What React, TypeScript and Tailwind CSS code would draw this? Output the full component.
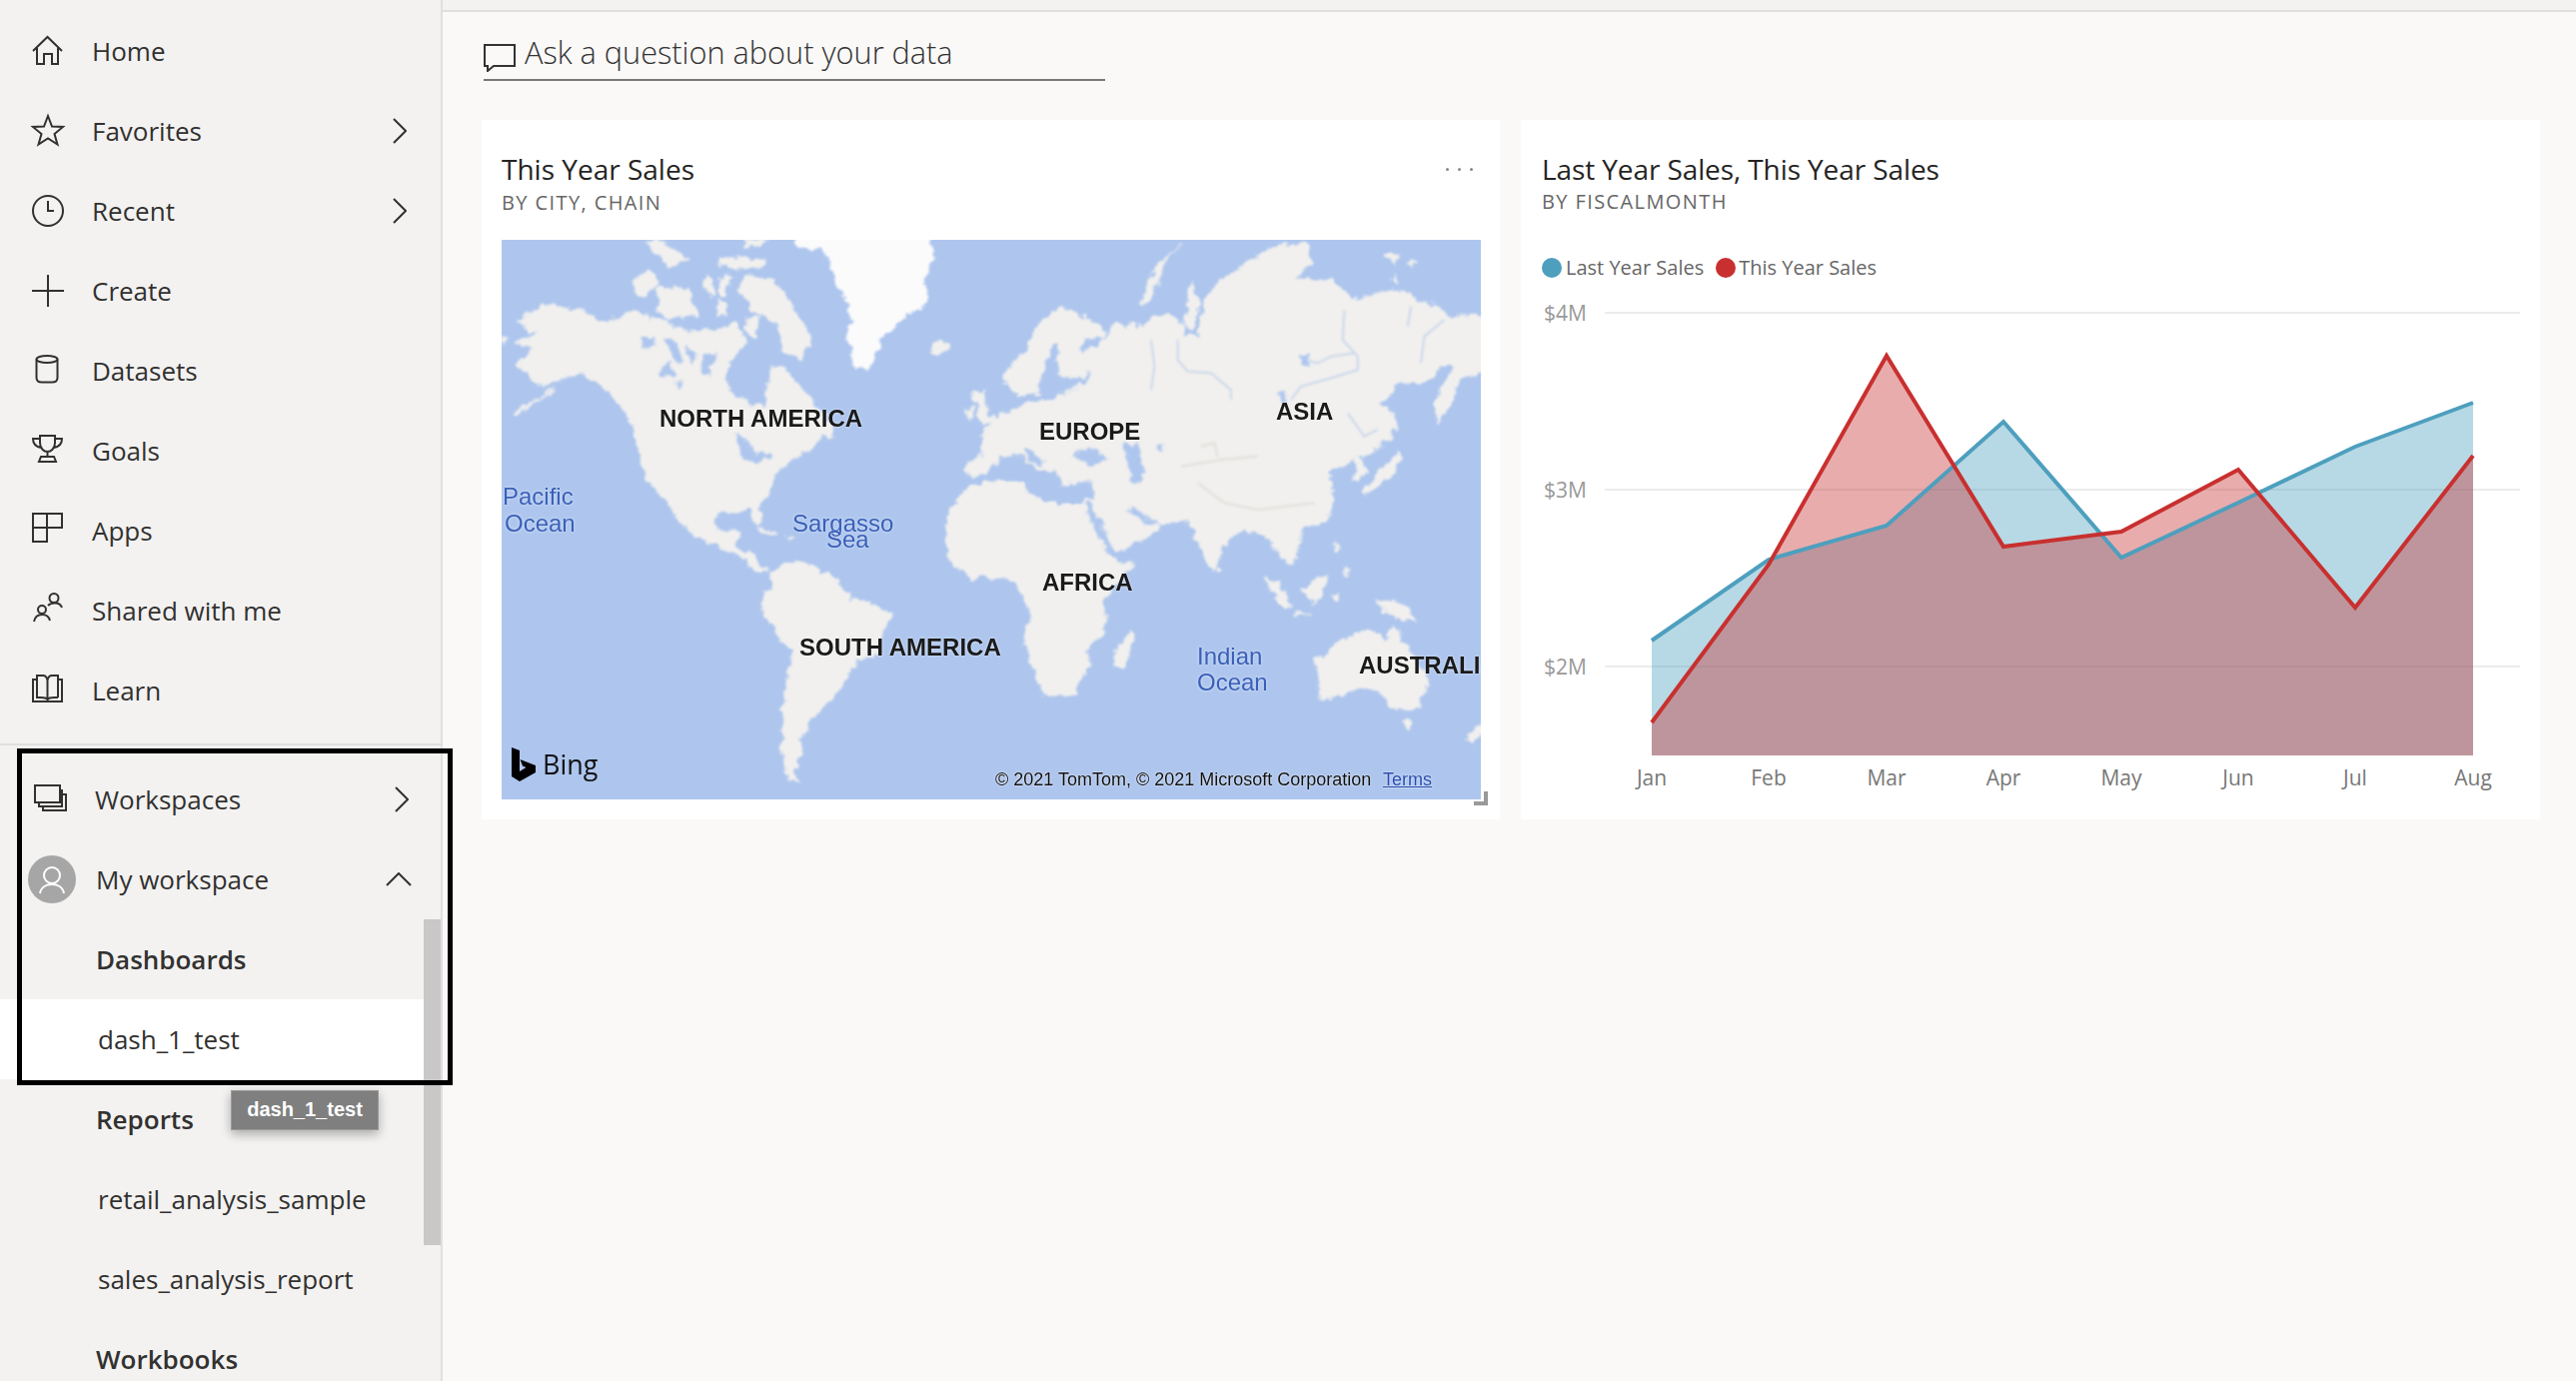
const sans = 'font-["Open_Sans","Liberation_Sans",sans-serif]'

function HomeIcon() {
  return <path d="M1 16 L15.5 2 L30 16 M5 13 V29 H12 V19 H20 V29 H26 V13" />
}
function StarIcon() {
  return <path d="M16 1 L20 11.5 L31 12 L22.5 19 L25.5 29.5 L16 23.5 L6.5 29.5 L9.5 19 L1 12 L12 11.5 Z" />
}
function ClockIcon() {
  return (
    <>
      <circle cx="16" cy="16" r="15" />
      <path d="M16 6 V16 H22" />
    </>
  )
}
function PlusIcon() {
  return <path d="M0 16 H32 M16 0 V32" />
}
function DatasetIcon() {
  return (
    <>
      <ellipse cx="15" cy="4.5" rx="10.5" ry="3.5" />
      <path d="M4.5 4.5 V23 Q4.5 27.5 10 27.5 H20 Q25.5 27.5 25.5 23 V4.5" />
    </>
  )
}
function TrophyIcon() {
  return (
    <path d="M8 1 H23 V8 C23 14 19 17 15.5 17 C12 17 8 14 8 8 Z M8 4 H1 C1 9 4 12 9 13 M23 4 H30 C30 9 27 12 22 13 M15.5 17 V22 M9 22 H22 L24 27 H7 Z" />
  )
}
function AppsIcon() {
  return <path d="M1 -1 H30 V13 H1 Z M1 13 H15 V27 H1 Z M15 -1 V13" />
}
function SharedIcon() {
  return (
    <>
      <circle cx="22" cy="3.5" r="4.5" />
      <circle cx="10" cy="15" r="4" />
      <path d="M2 27 C3 22 6 20 10 20 C14 20 17 22 18 26 M16 11 C18 9 20 8.5 23 8.5 C26 8.5 29 10 30 13" />
    </>
  )
}
function BookIcon() {
  return (
    <path d="M5 5 H1 V27 H30 V5 H26 M5 23 V1 H11 C13 1 15 3 15.5 6 V25 C14 23 12 23 9 23 Z M26 23 V1 H20 C18 1 16 3 15.5 6 M15.5 25 C17 23 19 23 22 23 H26" />
  )
}
function WorkspacesIcon() {
  return <path d="M1 2 H26 V19 H1 Z M5 19 V23 H28 V7 H26 M9 23 V27 H32 V11 H28" />
}

function NavIcon({ children }: { children: React.ReactNode }) {
  return (
    <svg viewBox="0 0 32 32" className="w-[32px] h-[32px] shrink-0 overflow-visible" fill="none" stroke="#323130" strokeWidth="2">
      {children}
    </svg>
  )
}

function ChevronRight() {
  return (
    <svg viewBox="0 0 14 26" className="w-[14px] h-[26px]" fill="none" stroke="#323130" strokeWidth="2">
      <path d="M1 1 L13 13 L1 25" />
    </svg>
  )
}

const navItems = [
  { label: 'Home', icon: <HomeIcon /> },
  { label: 'Favorites', icon: <StarIcon />, chevron: true },
  { label: 'Recent', icon: <ClockIcon />, chevron: true },
  { label: 'Create', icon: <PlusIcon /> },
  { label: 'Datasets', icon: <DatasetIcon /> },
  { label: 'Goals', icon: <TrophyIcon /> },
  { label: 'Apps', icon: <AppsIcon /> },
  { label: 'Shared with me', icon: <SharedIcon /> },
  { label: 'Learn', icon: <BookIcon /> },
]

function Sidebar() {
  return (
    <aside className="relative w-[443px] h-[1382px] shrink-0 overflow-hidden bg-[#f3f2f1] border-r-2 border-[#e1dfdd] text-[#323130] text-[26px]">
      <div className="pt-[11px] pb-[13px] border-b-2 border-[#e1dfdd]">
        {navItems.map((item) => (
          <div key={item.label} className="h-[80px] flex items-center pl-[32px]">
            <NavIcon>{item.icon}</NavIcon>
            <span className="ml-[28px]">{item.label}</span>
            {item.chevron && (
              <span className="ml-auto mr-[34px] flex">
                <ChevronRight />
              </span>
            )}
          </div>
        ))}
      </div>

      <div className="pt-[14px]">
        <div className="h-[80px] flex items-center pl-[34px]">
          <NavIcon>
            <WorkspacesIcon />
          </NavIcon>
          <span className="ml-[29px]">Workspaces</span>
          <span className="ml-auto mr-[32px] flex">
            <ChevronRight />
          </span>
        </div>
        <div className="h-[80px] flex items-center pl-[28px]">
          <span className="w-[48px] h-[48px] rounded-full bg-[#a6a6a6] shrink-0">
            <svg viewBox="0 0 48 48" className="w-[48px] h-[48px]" fill="none" stroke="#ffffff" strokeWidth="2">
              <circle cx="24" cy="20" r="8" />
              <path d="M12 38 C13 32 18 29 24 29 C30 29 35 32 36 38" />
            </svg>
          </span>
          <span className="ml-[20px]">My workspace</span>
          <span className="ml-auto mr-[29px] flex">
            <svg viewBox="0 0 26 14" className="w-[26px] h-[14px]" fill="none" stroke="#323130" strokeWidth="2">
              <path d="M1 13 L13 1 L25 13" />
            </svg>
          </span>
        </div>
        <div className="h-[80px] flex items-center pl-[96px] font-semibold">Dashboards</div>
        <div className="h-[80px] flex items-center pl-[98px] bg-white">dash_1_test</div>
        <div className="h-[80px] flex items-center pl-[96px] font-semibold">Reports</div>
        <div className="h-[80px] flex items-center pl-[98px]">retail_analysis_sample</div>
        <div className="h-[80px] flex items-center pl-[98px]">sales_analysis_report</div>
        <div className="h-[80px] flex items-center pl-[96px] font-semibold">Workbooks</div>
      </div>

      {/* scrollbar */}
      <div className="absolute left-[424px] top-[920px] w-[17px] h-[326px] bg-[#c8c8c8]" />
    </aside>
  )
}

function MapShapes() {
  return (
    <svg viewBox="0 0 2940 1680" className="block w-[980px] h-[560px]">
      <defs>
        <filter id="coast" x="-5%" y="-5%" width="110%" height="110%">
          <feTurbulence type="fractalNoise" baseFrequency="0.035" numOctaves="4" seed="7" result="noise" />
          <feDisplacementMap in="SourceGraphic" in2="noise" scale="34" xChannelSelector="R" yChannelSelector="G" />
          <feGaussianBlur stdDeviation="3" />
        </filter>
        <filter id="soft" x="-5%" y="-5%" width="110%" height="110%">
          <feGaussianBlur stdDeviation="3" />
        </filter>
      </defs>
      <g filter="url(#coast)" fill="#f1f0ee" stroke="#f1f0ee" strokeWidth="4" strokeLinejoin="round">
        {/* north america, central america */}
        <polygon points="50,240 130,195 230,210 320,250 380,215 470,240 560,280 650,270 700,250 730,310 700,340 665,400 680,450 740,490 790,500 800,440 810,385 850,385 900,450 960,510 1000,590 960,590 920,630 860,670 820,700 810,760 770,800 785,850 765,855 745,805 640,825 640,860 650,870 720,880 700,920 750,940 780,990 800,990 780,1000 750,980 700,940 640,915 580,890 530,840 490,780 430,710 410,620 390,540 340,480 300,430 220,400 130,440 90,420 50,370 100,320 40,310 100,290" />
        <polygon points="120,470 160,445 130,470 40,525 30,520" />
        <polygon points="0,290 10,295 5,310 0,310" />
        {/* canadian arctic */}
        <polygon points="810,120 860,180 930,290 900,350 850,320 830,250 760,210 710,160 730,110" />
        <polygon points="470,140 560,150 590,220 500,240 470,210" />
        <polygon points="405,110 440,90 475,120 430,175 400,160" />
        <polygon points="430,10 470,0 560,60 500,80" />
        <polygon points="650,50 790,60 770,85 660,80" />
        <polygon points="610,110 640,120 630,170 610,150" />
        <polygon points="660,110 690,110 670,170 650,160" />
        <polygon points="650,180 680,220 650,225" />
        <polygon points="730,0 800,0 780,20 740,20" />
        <polygon points="740,240 770,230 760,290 735,280" />
        <polygon points="840,290 880,300 900,360 850,340" />
        {/* caribbean */}
        <polygon points="770,865 830,880 820,888 780,875" />
        <polygon points="855,890 875,895 860,900" />
        {/* south america */}
        <g transform="translate(0,840)">
          <polygon points="815,150 870,125 930,135 1000,180 1050,240 1100,245 1170,285 1140,350 1130,410 1070,420 1020,500 960,570 930,600 900,660 895,720 870,760 900,785 860,780 845,720 840,600 865,440 880,390 830,350 780,270 790,220 815,190" />
        </g>
        {/* iceland, britain */}
        <polygon points="1285,330 1320,300 1350,315 1310,350" />
        <polygon points="1420,460 1445,450 1450,500 1480,540 1440,560 1430,510" />
        <polygon points="1390,520 1420,505 1415,535 1395,535" />
        {/* eurasia */}
        <g transform="translate(1440,0)">
          <polygon points="-50,700 -45,670 10,640 0,590 40,540 110,500 200,480 270,460 310,420 320,370 270,360 320,340 370,300 400,250 470,260 560,220 610,260 600,290 650,290 660,240 670,180 720,120 800,70 900,10 980,20 990,70 940,120 1050,120 1120,180 1240,150 1310,180 1390,210 1400,240 1480,220 1520,240 1520,390 1430,420 1410,490 1375,545 1360,490 1420,380 1380,385 1340,425 1250,430 1200,490 1240,530 1250,560 1220,600 1170,640 1130,650 1160,700 1110,730 1090,680 1040,700 1060,780 1040,840 960,870 950,960 930,975 880,930 870,900 830,880 790,865 740,900 700,990 670,950 640,880 610,840 540,850 510,890 400,940 360,870 330,840 305,790 340,760 240,760 200,700 100,700 40,720" />
          <polygon points="70,400 130,340 160,270 240,200 300,230 375,270 360,300 310,290 300,330 340,400 260,460 200,440 170,460 110,470 70,420" />
          <polygon points="480,190 520,80 610,10 560,50 505,190" />
          <polygon points="610,250 630,130 650,180 640,270" />
          <polygon points="1210,40 1250,40 1240,70" />
          <polygon points="1290,60 1310,70 1300,75" />
          <polygon points="1235,110 1255,120 1245,130" />
          <polygon points="1140,760 1250,640 1265,650 1230,710 1150,770" />
          <polygon points="1370,470 1420,430 1410,490 1370,550" />
        </g>
        {/* africa and the islands south of asia */}
        <g transform="translate(1440,840)">
          <polygon points="-100,0 -110,60 -100,110 -40,175 60,170 110,190 145,290 130,370 190,530 270,525 330,430 320,390 375,320 365,250 460,130 400,130 360,30 320,-50 190,-50 120,-110 0,-110 -50,-90 -100,-20" />
          <polygon points="405,390 450,335 455,360 430,445 405,440" />
          <polygon points="850,175 890,190 930,265 905,260" />
          <polygon points="940,275 990,285 940,290" />
          <polygon points="960,210 1035,170 1030,220 1000,250" />
          <polygon points="1185,245 1230,240 1280,270 1305,305 1240,295" />
          <polygon points="1060,70 1075,75 1065,90" />
          <polygon points="1090,145 1110,150 1095,165" />
          <polygon points="1050,230 1075,225 1065,250" />
          <polygon points="1005,420 1090,360 1160,330 1190,345 1215,370 1240,320 1290,400 1340,470 1310,570 1240,575 1195,510 1120,510 1020,540" />
          <polygon points="1270,605 1290,605 1280,635" />
          <polygon points="1455,650 1500,610 1500,650 1475,670" />
          <polygon points="710,150 725,155 715,165" />
        </g>
      </g>

      {/* greenland */}
      <polygon filter="url(#coast)" fill="#fbfbfb" points="870,-30 1280,-30 1300,50 1270,110 1280,190 1200,240 1140,300 1110,380 1060,390 1040,310 1050,220 1020,150 960,30 890,20" />

      {/* inland water */}
      <g filter="url(#coast)" fill="#aec6ee">
        <polygon points="700,590 730,590 760,650 800,640 815,650 770,670 730,665" />
        <polygon points="415,300 455,290 460,320 420,325" />
        <polygon points="470,390 510,370 520,410 480,410" />
        <polygon points="495,300 530,310 540,370 510,350" />
        <polygon points="600,350 640,340 625,410 600,400" />
        <polygon points="555,320 585,330 575,375 555,365" />
        <polygon points="520,420 550,430 530,450" />
        <g transform="translate(1440,0)">
          <polygon points="170,460 190,380 215,310 240,310 220,360 240,420 300,410 330,400 310,430 260,450 210,480" />
          <polygon points="270,650 320,620 385,660 330,680" />
          <polygon points="430,620 475,610 490,720 450,720" />
          <polygon points="-50,730 20,700 60,650 130,650 180,700 220,690 240,740 330,720 340,780 300,785 190,790 120,730 0,725" />
          <polygon points="130,620 190,670 180,680 130,640" />
          <polygon points="310,790 330,790 405,950 390,955 345,880" />
          <polygon points="440,800 500,830 540,850 510,860 460,830" />
          <polygon points="955,345 985,345 985,380 965,375" />
          <polygon points="895,450 915,450 920,490 900,490" />
          <polygon points="525,620 550,610 535,640" />
          <polygon points="1040,700 1120,660 1130,700 1110,740 1060,730" />
        </g>
      </g>

      {/* rivers and relief */}
      <g transform="translate(1440,0)" fill="none" filter="url(#soft)">
        <g stroke="#c4d2ea" strokeWidth="5">
          <polyline points="590,300 590,360 620,395 690,400 750,450 750,480" />
          <polyline points="1090,210 1085,300 1130,350 1130,390 1050,415 960,440 930,480" />
          <polyline points="985,365 1010,370 1050,350 1120,340" />
          <polyline points="1290,200 1280,260" />
          <polyline points="1390,240 1330,290 1320,370" />
          <polyline points="1100,520 1150,590 1190,570" />
          <polyline points="510,300 520,380 510,450" />
        </g>
        <g stroke="#e2e1de" strokeWidth="7">
          <polyline points="600,680 720,660 830,650" />
          <polyline points="650,730 730,790 830,810 1000,790" />
          <polyline points="660,620 700,610 710,650" />
        </g>
      </g>
    </svg>
  )
}

const mapLabels = [
  { text: 'NORTH AMERICA', cls: 'left-[158px] top-[167px] font-bold text-[#1a1a1a]' },
  { text: 'EUROPE', cls: 'left-[538px] top-[180px] font-bold text-[#1a1a1a]' },
  { text: 'ASIA', cls: 'left-[775px] top-[160px] font-bold text-[#1a1a1a]' },
  { text: 'AFRICA', cls: 'left-[541px] top-[331px] font-bold text-[#1a1a1a]' },
  { text: 'SOUTH AMERICA', cls: 'left-[298px] top-[396px] font-bold text-[#1a1a1a]' },
  { text: 'AUSTRALIA', cls: 'left-[858px] top-[414px] font-bold text-[#1a1a1a]' },
  { text: 'Pacific', cls: 'left-[1px] top-[245px] text-[#3a5fb8]' },
  { text: 'Ocean', cls: 'left-[3px] top-[272px] text-[#3a5fb8]' },
  { text: 'Sargasso', cls: 'left-[291px] top-[272px] text-[#3a5fb8]' },
  { text: 'Sea', cls: 'left-[325px] top-[288px] text-[#3a5fb8]' },
  { text: 'Indian', cls: 'left-[696px] top-[405px] text-[#3a5fb8]' },
  { text: 'Ocean', cls: 'left-[696px] top-[431px] text-[#3a5fb8]' },
]

function WorldMap() {
  return (
    <div className='relative w-[980px] h-[560px] overflow-hidden bg-[#aec6ee] font-["Liberation_Sans",sans-serif]'>
      <MapShapes />
      {mapLabels.map((l) => (
        <span
          key={l.text + l.cls}
          className={`absolute text-[24px] leading-[24px] whitespace-nowrap [text-shadow:0_0_3px_rgba(255,255,255,0.6)] ${l.cls}`}
        >
          {l.text}
        </span>
      ))}
      <div className="absolute left-[10px] top-[508px] flex items-center">
        <svg viewBox="0 0 24 34" className="w-[24px] h-[34px]" fill="#000000">
          <path d="M0 0 L8 3 V24 L14.5 20 L11 18.5 L8.5 12 L24 18 V25 L8 34 L0 29 Z" />
        </svg>
        <span className={`ml-[7px] text-[27px] leading-[34px] text-[#111111] ${sans}`}>Bing</span>
      </div>
      <div className="absolute left-[494px] top-[529px] text-[18px] leading-[22px] whitespace-nowrap text-[#111111] [text-shadow:0_0_2px_#ffffff]">
        © 2021 TomTom, © 2021 Microsoft Corporation
      </div>
      <div className="absolute left-[882px] top-[529px] text-[18px] leading-[22px] underline text-[#2a4bb0] [text-shadow:0_0_2px_#ffffff]">
        Terms
      </div>
    </div>
  )
}

const months = ['Jan', 'Feb', 'Mar', 'Apr', 'May', 'Jun', 'Jul', 'Aug']
const xs = [131, 248, 366, 483, 601, 718, 835, 953]
const lastYear = [351, 270, 236, 132, 268, 213, 157, 113]
const thisYear = [433, 275, 66, 257, 242, 180, 318, 166]
const baseY = 466

function linePoints(ys: number[]) {
  return ys.map((y, i) => `${xs[i]},${y}`).join(' ')
}
function areaPoints(ys: number[]) {
  return `${xs[0]},${baseY} ${linePoints(ys)} ${xs[7]},${baseY}`
}

function SalesChart() {
  return (
    <svg viewBox="0 0 1020 510" className="block w-[1020px] h-[510px]">
      {[
        { y: 23, label: '$4M' },
        { y: 200, label: '$3M' },
        { y: 377, label: '$2M' },
      ].map((g) => (
        <g key={g.label}>
          <line x1="84" x2="1000" y1={g.y} y2={g.y} stroke="#ececec" strokeWidth="2" />
          <text x="23" y={g.y + 8} fontSize="21" fill="#999999">
            {g.label}
          </text>
        </g>
      ))}
      <polygon points={areaPoints(lastYear)} fill="#4a9fbf" fillOpacity="0.4" />
      <polygon points={areaPoints(thisYear)} fill="#c83030" fillOpacity="0.4" />
      <polyline points={linePoints(lastYear)} fill="none" stroke="#4e9fbe" strokeWidth="4" />
      <polyline points={linePoints(thisYear)} fill="none" stroke="#c8302f" strokeWidth="4" />
      {months.map((m, i) => (
        <text key={m} x={xs[i]} y="496" fontSize="21" fill="#777777" textAnchor="middle">
          {m}
        </text>
      ))}
    </svg>
  )
}

export default function App() {
  return (
    <div className={`relative flex w-[2578px] h-[1382px] overflow-hidden bg-[#faf9f8] ${sans}`}>
      <Sidebar />

      <main className="flex-1">
        <div className="h-[12px] bg-[#f3f2f1] border-b-2 border-[#e1dfdd]" />

        <div className="ml-[41px] mt-[27px] w-[622px] h-[42px] flex items-center border-b-2 border-[#777777]">
          <svg viewBox="0 0 32 28" className="w-[32px] h-[28px] mb-[2px]" fill="none" stroke="#333333" strokeWidth="2">
            <path d="M1 1 H31 V22 H10 L4 27 V22 H1 Z" />
          </svg>
          <span className="ml-[9px] mb-[15px] text-[30.7px] leading-[38px] font-light text-[#333333] whitespace-nowrap">
            Ask a question about your data
          </span>
        </div>

        <div className="ml-[39px] mt-[39px] flex gap-[21px]">
          <section className="relative w-[1019px] h-[700px] bg-white px-[20px] pt-[29px]">
            <div className="flex justify-between">
              <div>
                <h2 className="text-[28px] leading-[40px] text-[#252423]">This Year Sales</h2>
                <p className="text-[20px] leading-[27px] tracking-[1.4px] text-[#666666]">BY CITY, CHAIN</p>
              </div>
              <div className="flex gap-[9px] mt-[19px] mr-[7px]">
                <span className="w-[3px] h-[3px] rounded-full bg-[#888888]" />
                <span className="w-[3px] h-[3px] rounded-full bg-[#888888]" />
                <span className="w-[3px] h-[3px] rounded-full bg-[#888888]" />
              </div>
            </div>
            <div className="mt-[24px]">
              <WorldMap />
            </div>
            {/* resize handle */}
            <div className="absolute left-[993px] top-[672px] w-[14px] h-[14px] border-r-4 border-b-4 border-[#999999]" />
          </section>

          <section className="w-[1020px] h-[700px] bg-white pt-[29px]">
            <div className="pl-[21px]">
              <h2 className="text-[28px] leading-[40px] tracking-[-0.1px] text-[#252423]">Last Year Sales, This Year Sales</h2>
              <p className="text-[20px] leading-[26px] tracking-[1.4px] text-[#666666]">BY FISCALMONTH</p>
              <div className="mt-[38px] h-[30px] flex items-center text-[20px] text-[#666666]">
                <span className="w-[20px] h-[20px] rounded-full bg-[#4e9fbe]" />
                <span className="ml-[4px]">Last Year Sales</span>
                <span className="ml-[12px] w-[20px] h-[20px] rounded-full bg-[#c8302f]" />
                <span className="ml-[3px]">This Year Sales</span>
              </div>
            </div>
            <div className="mt-[7px]">
              <SalesChart />
            </div>
          </section>
        </div>
      </main>

      {/* highlight box and tooltip drawn over the nav */}
      <div className="absolute left-[17px] top-[749px] w-[436px] h-[337px] border-[5px] border-black" />
      <div className="absolute left-[231px] top-[1091px] w-[148px] h-[40px] bg-[#7f7f7f] border border-[#999999] shadow-[0_4px_10px_rgba(0,0,0,0.3)] flex items-center justify-center pb-[2px] font-['Liberation_Sans',sans-serif] font-bold text-[20px] text-white">
        dash_1_test
      </div>
    </div>
  )
}
